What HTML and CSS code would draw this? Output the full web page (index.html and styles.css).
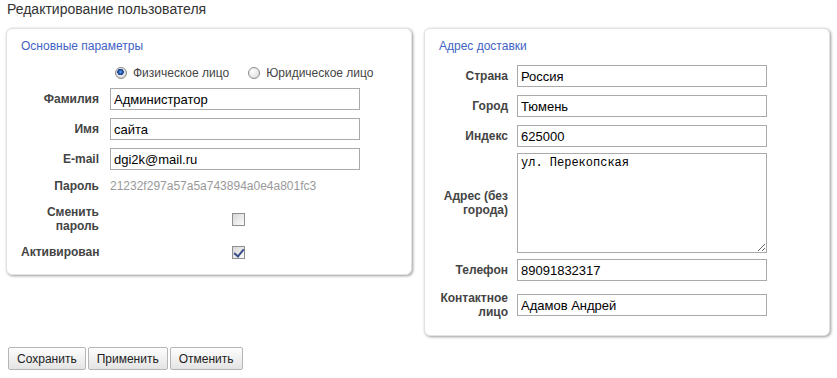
FILE: index.html
```html
<!DOCTYPE html>
<html lang="ru">
<head>
    <meta charset="UTF-8">
    <title>Редактирование пользователя</title>
    <link rel="stylesheet" href="styles.css">
</head>
<body>
    <h1 class="page-title">Редактирование пользователя</h1>

    <form class="user-form">
        <div class="panels">
            <!-- Main params -->
            <div class="panel panel-main">
                <h2 class="panel-title">Основные параметры</h2>

                <div class="row row-radio">
                    <label class="radio-item"><input type="radio" name="type" checked> Физическое лицо</label>
                    <label class="radio-item"><input type="radio" name="type"> Юридическое лицо</label>
                </div>
                <div class="row">
                    <label class="field-label">Фамилия</label>
                    <input type="text" class="text-input" value="Администратор">
                </div>
                <div class="row">
                    <label class="field-label">Имя</label>
                    <input type="text" class="text-input" value="сайта">
                </div>
                <div class="row">
                    <label class="field-label">E-mail</label>
                    <input type="text" class="text-input" value="dgi2k@mail.ru">
                </div>
                <div class="row row-pass">
                    <span class="field-label">Пароль</span>
                    <span class="pass-value">21232f297a57a5a743894a0e4a801fc3</span>
                </div>
                <div class="row row-two">
                    <label class="field-label">Сменить пароль</label>
                    <span class="check-cell"><input type="checkbox" class="check"></span>
                </div>
                <div class="row row-two">
                    <label class="field-label">Активирован</label>
                    <span class="check-cell"><input type="checkbox" class="check" checked></span>
                </div>
            </div>

            <!-- Delivery address -->
            <div class="panel panel-addr">
                <h2 class="panel-title">Адрес доставки</h2>

                <div class="row row-first">
                    <label class="field-label">Страна</label>
                    <input type="text" class="text-input" value="Россия">
                </div>
                <div class="row">
                    <label class="field-label">Город</label>
                    <input type="text" class="text-input" value="Тюмень">
                </div>
                <div class="row">
                    <label class="field-label">Индекс</label>
                    <input type="text" class="text-input" value="625000">
                </div>
                <div class="row row-area">
                    <label class="field-label">Адрес (без города)</label>
                    <textarea class="text-area">ул. Перекопская</textarea>
                </div>
                <div class="row row-area">
                    <label class="field-label">Телефон</label>
                    <input type="text" class="text-input" value="89091832317">
                </div>
                <div class="row row-contact">
                    <label class="field-label">Контактное лицо</label>
                    <input type="text" class="text-input" value="Адамов Андрей">
                </div>
            </div>
        </div>

        <div class="buttons">
            <button type="submit" class="btn">Сохранить</button>
            <button type="button" class="btn">Применить</button>
            <button type="button" class="btn">Отменить</button>
        </div>
    </form>
</body>
</html>
```

FILE: styles.css
```css
* {
    box-sizing: border-box;
}

body {
    margin: 0;
    padding: 0;
    background-color: #fff;
    font-family: "Liberation Sans", Arial, sans-serif;
    font-size: 12px;
    color: #333;
}

.page-title {
    margin: 0 0 10px 7px;
    font-size: 14px;
    font-weight: normal;
    line-height: 18px;
    color: #333;
}

.panels {
    display: flex;
    align-items: flex-start;
    gap: 12px;
    margin-left: 6px;
}

.panel {
    width: 406px;
    padding: 8px 14px 11px;
    border: 1px solid #e2e2e2;
    border-radius: 6px;
    box-shadow: 1px 1px 3px rgba(0, 0, 0, 0.4);
    background-color: #fff;
}

.panel-addr {
    padding-bottom: 16px;
}

.panel-title {
    margin: 0;
    font-size: 12px;
    font-weight: normal;
    line-height: 18px;
    color: #3f63c4;
}

.row {
    display: flex;
    align-items: center;
    min-height: 22px;
    margin-top: 8px;
}

.field-label {
    flex: none;
    width: 78px;
    margin-right: 11px;
    text-align: right;
    font-weight: bold;
    line-height: 14px;
    color: #444;
}

.panel-addr .field-label {
    width: 69px;
    margin-right: 9px;
}

.text-input {
    width: 250px;
    height: 22px;
    padding: 0 3px;
    border: 1px solid #aaa;
    font-family: "Liberation Sans", Arial, sans-serif;
    font-size: 13px;
    color: #000;
}

.text-area {
    width: 250px;
    height: 100px;
    padding: 2px 3px;
    border: 1px solid #aaa;
    font-family: "Liberation Mono", "Courier New", monospace;
    font-size: 12px;
    color: #000;
}

/* radio row */
.row-radio {
    min-height: 16px;
    margin-top: 10px;
    padding-left: 94px;
}

.radio-item {
    display: flex;
    align-items: center;
    margin-right: 19px;
    color: #444;
}

.radio-item input {
    appearance: none;
    width: 12px;
    height: 12px;
    margin: 0 6px 0 0;
    border: 1px solid #8a8a8a;
    border-radius: 50%;
    background: radial-gradient(circle at 35% 35%, #fff, #d8d8d8);
}

.radio-item input:checked {
    background: radial-gradient(circle at 45% 40%, #7fb0ee 0, #1c4fa8 2px, #163f88 3px, #e8e8e8 3.5px, #c8c8c8);
}

.row-radio + .row {
    margin-top: 7px;
}

.row-pass {
    margin-top: 5px;
}

.pass-value {
    color: #999;
}

.row-two {
    min-height: 28px;
}

.row-two:last-child {
    min-height: 22px;
}

.check-cell {
    padding-left: 122px;
    display: flex;
}

.check {
    appearance: none;
    position: relative;
    width: 13px;
    height: 13px;
    margin: 0;
    border: 1px solid #8e8f8f;
    background: linear-gradient(135deg, #d6d6d6, #fcfcfc);
}

.check:checked::after {
    content: "";
    position: absolute;
    left: 3px;
    top: 0;
    width: 4px;
    height: 8px;
    border-right: 2px solid #3b4f8c;
    border-bottom: 2px solid #3b4f8c;
    transform: rotate(40deg);
}

/* address panel rows */
.row-first {
    margin-top: 10px;
}

.row-area {
    margin-top: 6px;
}

.row-contact {
    margin-top: 10px;
    min-height: 28px;
}

/* buttons */
.buttons {
    display: flex;
    gap: 2px;
    margin: 11px 0 0 8px;
}

.btn {
    height: 23px;
    padding: 0 8px;
    border: 1px solid #b5b5b5;
    border-radius: 2px;
    background: linear-gradient(#fdfdfd, #e4e4e4);
    font-family: "Liberation Sans", Arial, sans-serif;
    font-size: 12px;
    color: #222;
    cursor: pointer;
}
```
